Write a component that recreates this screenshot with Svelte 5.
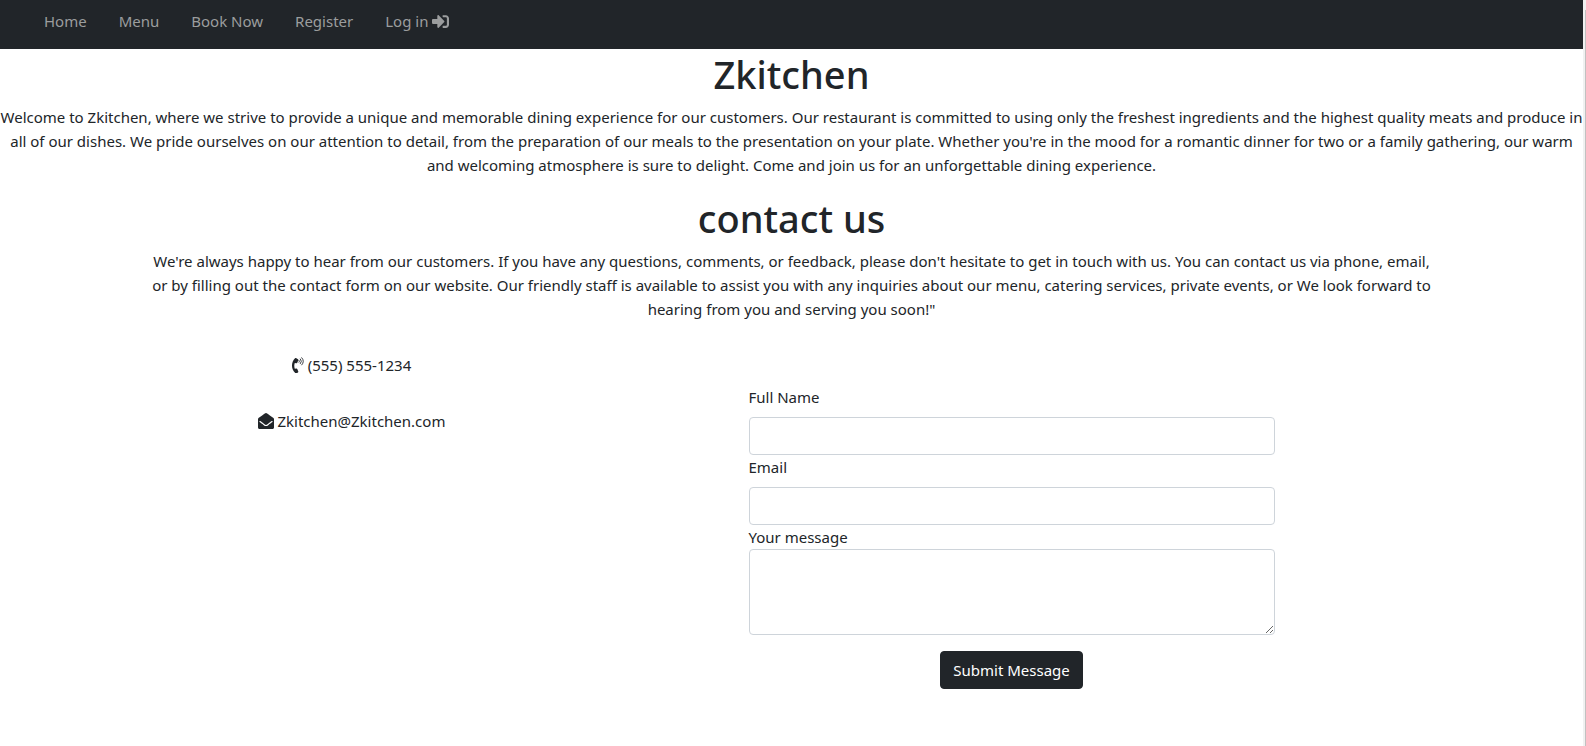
<script>
  const links = ['Home', 'Menu', 'Book Now', 'Register'];
  let name = $state('');
  let email = $state('');
  let message = $state('');
</script>

<div class="page">
  <nav class="navbar" aria-label="Main">
    {#each links as link}
      <a href="#{link.toLowerCase().replace(' ', '-')}">{link}</a>
    {/each}
    <a href="#login">Log in
      <svg class="icon login" viewBox="0 0 512 512" aria-hidden="true">
        <path d="M416 448h-84c-6.600 0-12-5.400-12-12v-40c0-6.600 5.400-12 12-12h84c17.700 0 32-14.300 32-32V160c0-17.700-14.300-32-32-32h-84c-6.600 0-12-5.400-12-12V76c0-6.600 5.400-12 12-12h84c53 0 96 43 96 96v192c0 53-43 96-96 96zm-47-209L201 71c-15-15-41-4.500-41 17v96H24c-13.300 0-24 10.700-24 24v96c0 13.300 10.700 24 24 24h136v96c0 21.500 26 32 41 17l168-168c9.300-9.400 9.300-24.600 0-34z" />
      </svg>
    </a>
  </nav>

  <main>
    <section class="intro">
      <h1>Zkitchen</h1>
      <p>
        Welcome to Zkitchen, where we strive to provide a unique and memorable dining experience for our customers. Our restaurant is committed to using only the freshest ingredients and the highest quality meats and produce in<br />
        all of our dishes. We pride ourselves on our attention to detail, from the preparation of our meals to the presentation on your plate. Whether you're in the mood for a romantic dinner for two or a family gathering, our warm<br />
        and welcoming atmosphere is sure to delight. Come and join us for an unforgettable dining experience.
      </p>
    </section>

    <section class="container">
      <h1>contact us</h1>
      <p>
        We're always happy to hear from our customers. If you have any questions, comments, or feedback, please don't hesitate to get in touch with us. You can contact us via phone, email,<br />
        or by filling out the contact form on our website. Our friendly staff is available to assist you with any inquiries about our menu, catering services, private events, or We look forward to<br />
        hearing from you and serving you soon!"
      </p>

      <div class="row">
        <address>
          <span>
            <svg class="icon phone" viewBox="0 0 384 512" aria-hidden="true">
              <path d="M97.330 506.970c-129.870-129.870-129.750-340.250 0-470a24 24 0 0 1 29.690-3.380l64.820 40.510a24 24 0 0 1 9.560 29.260l-32.410 81.030a24 24 0 0 1-24.670 14.970l-55.810-5.580c-21.050 58.260-20.610 122.470 0 179.470l55.810-5.580a24 24 0 0 1 24.670 14.970l32.410 81.030a24 24 0 0 1-9.560 29.260l-64.820 40.520a24 24 0 0 1-29.690-3.380v-23z" />
              <path class="wave" d="M218 100q34 38 0 76M260 54q76 84 0 168M304 14q112 124 0 248" />
            </svg>
            (555) 555-1234
          </span>
          <span>
            <svg class="icon" viewBox="0 0 512 512" aria-hidden="true">
              <path d="M48 512c-26.500 0-48-21.500-48-48V200.700a48 48 0 0 1 18.400-37.700C43.300 143.400 64 127.600 182.600 41.400 199.400 29.200 232.800-.3 256 0c23.200-.3 56.600 29.200 73.400 41.400C448 127.600 468.700 143.400 493.600 163A48 48 0 0 1 512 200.700V464c0 26.500-21.500 48-48 48z" />
              <path class="fold" d="M62 274c26 20 60 44 112 82 22 16 52 44 82 44s60-28 82-44c52-38 86-62 112-82" />
            </svg>
            Zkitchen@Zkitchen.com
          </span>
        </address>

        <form onsubmit={(event) => event.preventDefault()}>
          <label for="name">Full Name</label>
          <input id="name" type="text" bind:value={name} />
          <label for="email">Email</label>
          <input id="email" type="email" bind:value={email} />
          <label class="tight" for="message">Your message</label>
          <textarea id="message" bind:value={message}></textarea>
          <button type="submit">Submit Message</button>
        </form>
      </div>
    </section>
  </main>
</div>

<style>
  :global(body) {
    background: #fff;
  }

  .page {
    box-sizing: border-box;
    min-height: 100vh;
    padding-right: 3px;
    /* scroll thumb over its track, along the right edge */
    background:
      linear-gradient(#c1c1c1, #c1c1c1) right 10px / 1px 100% no-repeat,
      linear-gradient(#f1f1f1, #f1f1f1) right top / 3px 100% no-repeat;
    color: #212529;
    font: 15px/24px "Segoe UI", "Noto Sans", sans-serif;
  }

  .navbar {
    display: flex;
    gap: 32px;
    padding: 9px 44px 16px;
    background: #212529;
  }

  .navbar a {
    color: #9b9d9e;
    text-decoration: none;
    white-space: nowrap;
  }

  .icon {
    width: 16px;
    height: 16px;
    vertical-align: -2px;
    fill: currentColor;
  }

  .login {
    width: 17px;
    height: 17px;
    vertical-align: -3px;
  }

  .phone {
    width: 12px;
  }

  .wave {
    fill: none;
    stroke: currentColor;
    stroke-width: 28;
  }

  .fold {
    fill: none;
    stroke: #fff;
    stroke-width: 38;
    stroke-linecap: round;
  }

  section {
    text-align: center;
  }

  h1 {
    margin: 0 0 6px;
    font-size: 38px;
    font-weight: 500;
    line-height: 50px;
  }

  p {
    margin: 0 0 16px;
  }

  .container {
    box-sizing: border-box;
    max-width: 1320px;
    margin: 0 auto;
    padding: 0 12px;
  }

  .row {
    display: grid;
    grid-template-columns: 1fr 2fr;
    margin: 0 -12px;
    padding-top: 16px;
  }

  address {
    display: flex;
    flex-direction: column;
    gap: 32px;
    font-style: normal;
  }

  form {
    display: flex;
    flex-direction: column;
    width: 60%;
    max-width: 526px;
    margin: 32px auto 0;
    text-align: left;
  }

  label {
    margin-bottom: 8px;
  }

  .tight {
    margin-bottom: 0;
  }

  input,
  textarea {
    box-sizing: border-box;
    width: 100%;
    height: 38px;
    padding: 6px 12px;
    border: 1px solid #ced4da;
    border-radius: 4px;
    background: #fff;
    color: inherit;
    font: inherit;
  }

  textarea {
    height: 86px;
    resize: vertical;
  }

  button {
    align-self: center;
    margin-top: 16px;
    padding: 6px 12px;
    border: 1px solid #212529;
    border-radius: 4px;
    background: #212529;
    color: #fff;
    font: inherit;
  }
</style>
